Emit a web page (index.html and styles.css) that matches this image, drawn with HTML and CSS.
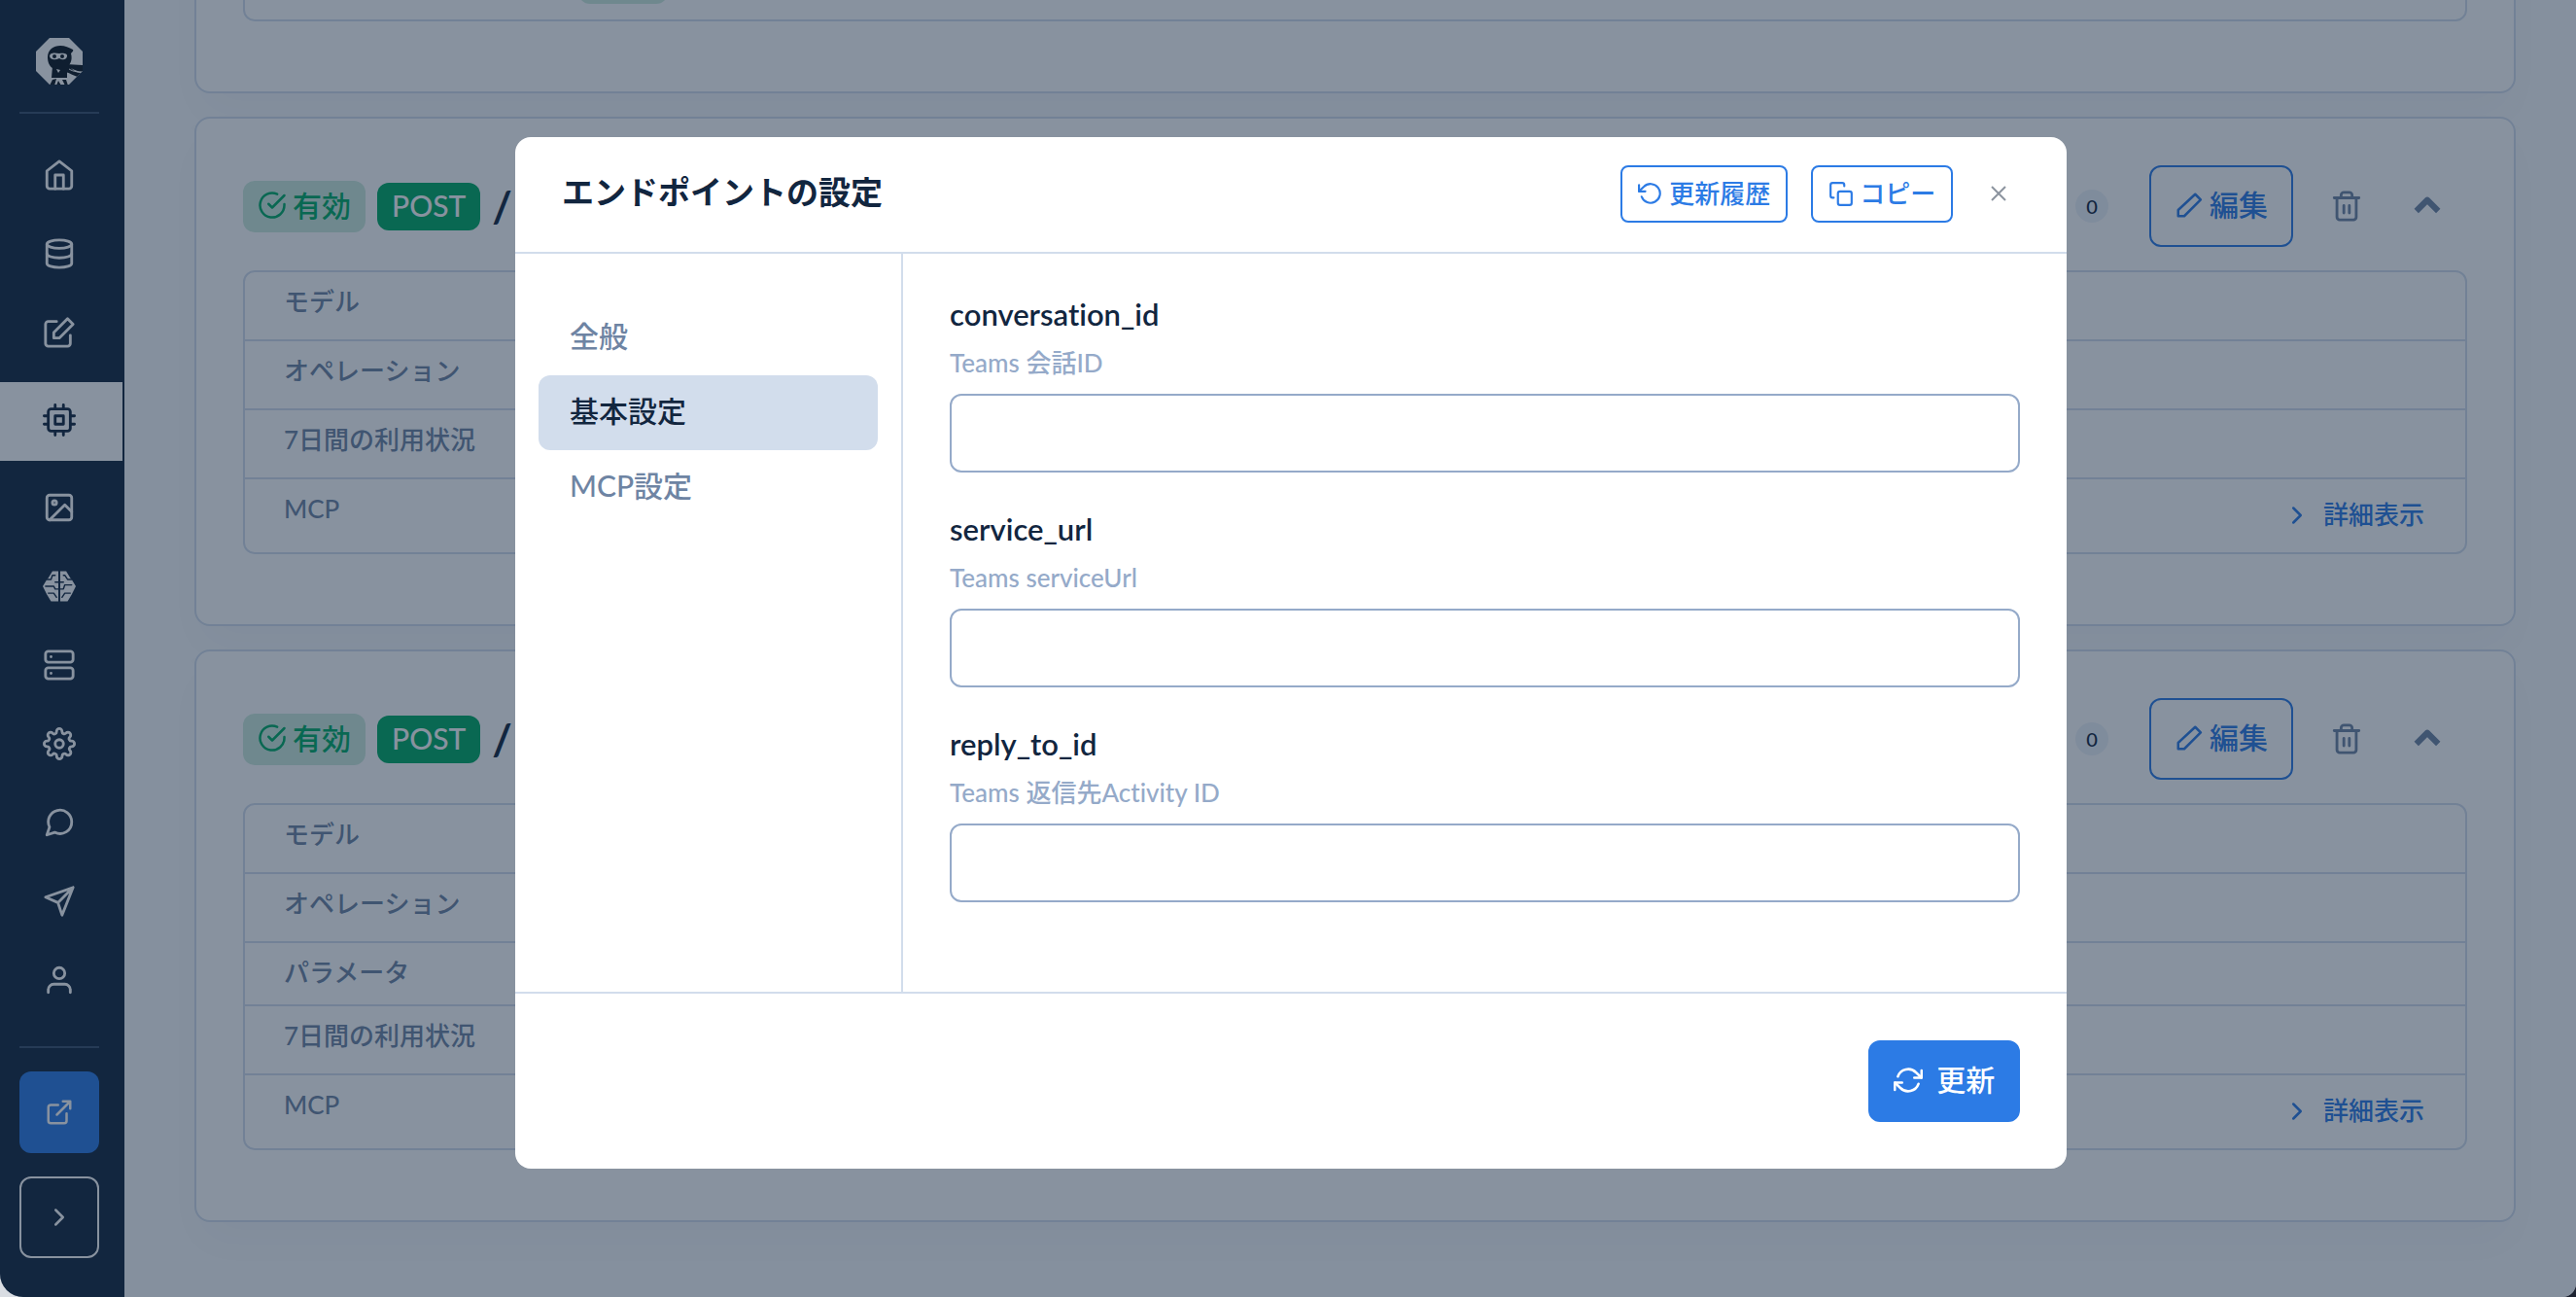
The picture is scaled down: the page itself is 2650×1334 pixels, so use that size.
FILE: index.html
```html
<!DOCTYPE html>
<html lang="ja">
<head>
  <meta charset="UTF-8" />
  <meta name="viewport" content="width=device-width, initial-scale=1.0"/>
  <title>エンドポイントの設定</title>
  <link rel="stylesheet" href="styles.css">
</head>
<body>
  <!-- shared icons -->
  <svg class="sprite" aria-hidden="true">
    <symbol id="i-check" viewBox="0 0 24 24"><path d="M22 11.1V12a10 10 0 1 1-5.9-9.1"/><path d="M22 4 12 14l-3-3"/></symbol>
    <symbol id="i-pencil" viewBox="0 0 24 24"><path d="M17 3l4.500 4.500L8 21H3v-5z"/></symbol>
    <symbol id="i-trash" viewBox="0 0 24 24"><path d="M3 6h18M19 6v14a2 2 0 0 1-2 2H7a2 2 0 0 1-2-2V6m3 0V4a2 2 0 0 1 2-2h4a2 2 0 0 1 2 2v2M10 11.500v5.500M14 11.500v5.500"/></symbol>
    <symbol id="i-up" viewBox="0 0 24 24"><path d="M3 16l9-9 9 9"/></symbol>
    <symbol id="i-right" viewBox="0 0 24 24"><path d="M9 18l6-6-6-6"/></symbol>
  </svg>

  <div class="app">
    <nav class="sidebar">
      <a class="brand" href="#" aria-label="ホーム">
        <svg viewBox="0 0 48 48">
          <defs><clipPath id="oct"><path d="M14 0h20l14 14v20L34 48H14L0 34V14z"/></clipPath></defs>
          <g clip-path="url(#oct)">
            <path fill="#fff" d="M0 0h48v48H0z"/>
            <g fill="#0d1720">
              <path d="M12 20C12 12 18 8 25 8c5 0 9 2 13 4 1 1-1 3-2 4 2 7-1 12-5 15H17c-3-2-5-6-5-11z"/>
              <path d="M17 29h15v12H16z"/>
              <path d="M31 27c6 0 11 1 18 1v7c-6 0-9-2-13-4 4 4 7 5 11 5l-2 5c-6-2-10-5-15-6z"/>
              <path d="M17 43l4-1-2 7h-5zM23 44l3 5h-5zM27 43h4l2 6h-3z"/>
            </g>
            <path fill="#fff" d="M14 19c0-4 5-4 10-3 4-1 9 0 8 3-1 4-5 4-8 2-4 2-9 2-10-2zM21 32l4 1-2 3z"/>
            <circle cx="19" cy="19" r="2" fill="#0d1720"/><circle cx="27" cy="19" r="2" fill="#0d1720"/>
            <path d="M34 32c5 3 9 3 14 3" fill="none" stroke="#fff" stroke-width="1"/>
          </g>
        </svg>
      </a>
      <hr class="divider">
      <ul class="menu">
        <li><a href="#" aria-label="ダッシュボード"><svg class="icon" viewBox="0 0 24 24"><path d="M3 9l9-7 9 7v11a2 2 0 0 1-2 2H5a2 2 0 0 1-2-2z"/><path d="M9 22V12h6v10"/></svg></a></li>
        <li><a href="#" aria-label="データ"><svg class="icon" viewBox="0 0 24 24"><ellipse cx="12" cy="5" rx="9" ry="3"/><path d="M21 12c0 1.700-4 3-9 3s-9-1.300-9-3"/><path d="M3 5v14c0 1.700 4 3 9 3s9-1.300 9-3V5"/></svg></a></li>
        <li><a href="#" aria-label="編集"><svg class="icon" viewBox="0 0 24 24"><path d="M10 4H4a2 2 0 0 0-2 2v14a2 2 0 0 0 2 2h14a2 2 0 0 0 2-2v-6"/><path d="M18 2l4 4-10 10H8v-4z"/></svg></a></li>
        <li class="active"><a href="#" aria-label="エンドポイント"><svg class="icon" viewBox="0 0 24 24"><rect x="4" y="4" width="16" height="16" rx="2"/><path d="M9 9h6v6H9zM9 1v3M15 1v3M9 20v3M15 20v3M20 9h3M20 15h3M1 9h3M1 15h3"/></svg></a></li>
        <li><a href="#" aria-label="画像"><svg class="icon" viewBox="0 0 24 24"><rect x="3" y="3" width="18" height="18" rx="2"/><circle cx="8.500" cy="8.500" r="1.500"/><path d="M21 15l-5-5L5 21"/></svg></a></li>
        <li><a href="#" aria-label="学習"><svg class="icon" viewBox="0 0 24 24">
          <path fill="currentColor" stroke="none" d="M11.300 1H7L4 6 3 7 0 12l3 6 3 5h5.300zM12.700 1H17l3 5 1 1 3 5-3 6-3 5h-5.300z"/>
          <path class="brain-line" d="M3 7h3l1-3h2M9 9h6M2 12h6l1 2h6l1-3h5M4 17h4l2 3M20 17h-4l-2 3M21 7h-3l-2-3h-1"/></svg></a></li>
        <li><a href="#" aria-label="サーバー"><svg class="icon" viewBox="0 0 24 24"><rect x="2" y="2" width="20" height="8" rx="2"/><rect x="2" y="14" width="20" height="8" rx="2"/><path d="M6 6h.01M6 18h.01"/></svg></a></li>
        <li><a href="#" aria-label="設定"><svg class="icon" viewBox="0 0 24 24"><circle cx="12" cy="12" r="3"/><path d="M19.400 15a1.650 1.650 0 0 0 .33 1.820l.06.06a2 2 0 1 1-2.830 2.830l-.06-.06a1.650 1.650 0 0 0-2.800 1.170V21a2 2 0 0 1-4 0v-.09A1.650 1.650 0 0 0 7.180 19.700l-.06.06a2 2 0 1 1-2.830-2.830l.06-.06A1.650 1.650 0 0 0 3.090 14H3a2 2 0 0 1 0-4h.09A1.650 1.650 0 0 0 4.300 7.180l-.06-.06a2 2 0 1 1 2.830-2.830l.06.06A1.650 1.650 0 0 0 10 3.090V3a2 2 0 0 1 4 0v.09a1.650 1.650 0 0 0 2.820 1.210l.06-.06a2 2 0 1 1 2.830 2.830l-.06.06A1.650 1.650 0 0 0 20.910 10H21a2 2 0 0 1 0 4h-.09a1.650 1.650 0 0 0-1.510 1z"/></svg></a></li>
        <li><a href="#" aria-label="チャット"><svg class="icon" viewBox="0 0 24 24"><path d="M21 11.500a8.400 8.400 0 0 1-12.300 7.600L3 21l1.900-5.700A8.500 8.500 0 1 1 21 11.500z"/></svg></a></li>
        <li><a href="#" aria-label="送信"><svg class="icon" viewBox="0 0 24 24"><path d="M22 2L11 13M22 2l-8 20-3-9-9-4z"/></svg></a></li>
        <li><a href="#" aria-label="ユーザー"><svg class="icon" viewBox="0 0 24 24"><path d="M20 21v-2a4 4 0 0 0-4-4H8a4 4 0 0 0-4 4v2"/><circle cx="12" cy="7" r="4"/></svg></a></li>
      </ul>
      <hr class="divider">
      <a class="side-btn open-btn" href="#" aria-label="外部リンク"><svg class="icon" viewBox="0 0 24 24"><path d="M18 13v6a2 2 0 0 1-2 2H5a2 2 0 0 1-2-2V8a2 2 0 0 1 2-2h6M15 3h6v6M10 14L21 3"/></svg></a>
      <button class="side-btn expand-btn" aria-label="メニューを開く"><svg class="icon"><use href="#i-right"/></svg></button>
    </nav>

    <main class="main">
      <section class="card">
        <table class="info">
          <tr class="last"><th></th><td><span class="tag"></span></td></tr>
        </table>
      </section>

      <section class="card">
        <div class="card-head">
          <span class="badge status"><svg class="icon"><use href="#i-check"/></svg>有効</span>
          <span class="badge method">POST</span>
          <h2 class="path">/</h2>
          <span class="count">0</span>
          <button class="btn outline"><svg class="icon"><use href="#i-pencil"/></svg>編集</button>
          <button class="icon-btn" aria-label="削除"><svg class="icon"><use href="#i-trash"/></svg></button>
          <button class="icon-btn up" aria-label="閉じる"><svg class="icon"><use href="#i-up"/></svg></button>
        </div>
        <table class="info">
          <tr class="tall"><th>モデル</th><td></td></tr>
          <tr class="tall"><th>オペレーション</th><td></td></tr>
          <tr class="tall"><th>7日間の利用状況</th><td></td></tr>
          <tr class="last"><th>MCP</th><td><a class="detail" href="#"><svg class="icon"><use href="#i-right"/></svg>詳細表示</a></td></tr>
        </table>
      </section>

      <section class="card">
        <div class="card-head">
          <span class="badge status"><svg class="icon"><use href="#i-check"/></svg>有効</span>
          <span class="badge method">POST</span>
          <h2 class="path">/</h2>
          <span class="count">0</span>
          <button class="btn outline"><svg class="icon"><use href="#i-pencil"/></svg>編集</button>
          <button class="icon-btn" aria-label="削除"><svg class="icon"><use href="#i-trash"/></svg></button>
          <button class="icon-btn up" aria-label="閉じる"><svg class="icon"><use href="#i-up"/></svg></button>
        </div>
        <table class="info">
          <tr class="tall"><th>モデル</th><td></td></tr>
          <tr class="tall"><th>オペレーション</th><td></td></tr>
          <tr><th>パラメータ</th><td></td></tr>
          <tr class="tall"><th>7日間の利用状況</th><td></td></tr>
          <tr class="last"><th>MCP</th><td><a class="detail" href="#"><svg class="icon"><use href="#i-right"/></svg>詳細表示</a></td></tr>
        </table>
      </section>
    </main>

    <!-- Settings modal -->
    <div class="overlay">
      <div class="modal" role="dialog" aria-labelledby="modalTitle">
        <header class="modal-header">
          <h1 id="modalTitle">エンドポイントの設定</h1>
          <button class="btn-sm"><svg class="icon" viewBox="0 0 24 24"><path d="M1 4v6h6"/><path d="M3.500 15a9 9 0 1 0 2.100-9.400L1 10"/></svg>更新履歴</button>
          <button class="btn-sm"><svg class="icon" viewBox="0 0 24 24"><rect x="9" y="10" width="13" height="13" rx="2"/><path d="M5 16H4a2 2 0 0 1-2-2V4a2 2 0 0 1 2-2h9a2 2 0 0 1 2 2v1"/></svg>コピー</button>
          <button class="close-btn" aria-label="閉じる"><svg viewBox="0 0 16 16"><path d="M1 1l14 14M15 1L1 15"/></svg></button>
        </header>
        <div class="modal-body">
          <nav class="tabs">
            <a href="#">全般</a>
            <a href="#" class="active">基本設定</a>
            <a href="#">MCP設定</a>
          </nav>
          <form class="fields" id="settings">
            <div class="field">
              <label for="conversation_id">conversation_id</label>
              <p>Teams 会話ID</p>
              <input type="text" id="conversation_id">
            </div>
            <div class="field">
              <label for="service_url">service_url</label>
              <p>Teams serviceUrl</p>
              <input type="text" id="service_url">
            </div>
            <div class="field">
              <label for="reply_to_id">reply_to_id</label>
              <p>Teams 返信先Activity ID</p>
              <input type="text" id="reply_to_id">
            </div>
          </form>
        </div>
        <footer class="modal-footer">
          <button class="btn primary" form="settings" type="button"><svg class="icon" viewBox="0 0 24 24"><path d="M23 4v6h-6M1 20v-6h6"/><path d="M3.500 9a9 9 0 0 1 14.900-3.400L23 10M1 14l4.600 4.400A9 9 0 0 0 20.500 15"/></svg>更新</button>
        </footer>
      </div>
    </div>
  </div>
</body>
</html>
```
FILE: styles.css
```css
* {
  margin: 0;
  padding: 0;
  box-sizing: border-box;
}

html {
  background: linear-gradient(to right, #d9dde3 50%, #1c2230 50%);
}

body {
  font-family: Lato, "Noto Sans CJK JP", sans-serif;
  font-size: 30px;
  font-weight: 500;
  font-variant-ligatures: none;
  line-height: 45px;
  color: #12263f;
}

a {
  color: inherit;
  text-decoration: none;
}

button,
input {
  font: inherit;
  color: inherit;
  background: none;
  border: none;
}

button {
  cursor: pointer;
}

.sprite {
  display: none;
}

.icon {
  width: 30px;
  height: 30px;
  flex: none;
  fill: none;
  stroke: currentColor;
  stroke-width: 2;
  stroke-linecap: round;
  stroke-linejoin: round;
}

.app {
  position: relative;
  display: flex;
  height: 100vh;
  overflow: hidden;
  background: #f9fbfd;
  border-radius: 0 0 14px 24px;
}

/* Sidebar */
.sidebar {
  width: 128px;
  flex: none;
  display: flex;
  flex-direction: column;
  padding: 39px 0 40px;
  background: #12263f;
  border-right: 2px solid #12263f;
  color: #fff;
}

.brand {
  width: 48px;
  height: 48px;
  margin: 0 37px 28px;
}

.brand svg {
  display: block;
}

.divider {
  width: 82px;
  margin-left: 20px;
  border: none;
  border-top: 2px solid #3b506c;
}

.menu {
  flex: 1;
  display: flex;
  flex-direction: column;
  list-style: none;
  padding-top: 22px;
}

.menu a {
  display: flex;
  align-items: center;
  height: 81px;
  padding-left: 44px;
}

.menu .icon {
  width: 34px;
  height: 34px;
}

.menu .active {
  margin: 11px 0 7px;
  background: #fff;
  color: #12263f;
}

.menu .active a {
  padding-bottom: 3px;
}

.brain-line {
  stroke: #12263f;
  stroke-width: 1;
}

.side-btn {
  display: flex;
  align-items: center;
  justify-content: center;
  width: 82px;
  height: 84px;
  margin: 24px 0 0 20px;
  border-radius: 12px;
}

.open-btn {
  background: #2c7be5;
}

.expand-btn {
  border: 2px solid #fff;
}

/* Endpoint cards, scrolled to the end of the list */
.main {
  flex: 1;
  display: flex;
  flex-direction: column;
  justify-content: flex-end;
  gap: 24px;
  padding: 0 62px 77px 72px;
}

.card {
  padding: 48px 48px 72px;
  background: #fff;
  border: 2px solid #d2ddec;
  border-radius: 16px;
  box-shadow: 0 24px 48px rgba(18, 38, 63, 0.03);
}

.card-head {
  display: flex;
  align-items: center;
  gap: 12px;
  margin-bottom: 24px;
}

.badge {
  display: flex;
  align-items: center;
  gap: 6px;
  padding: 3px 15px 5px;
  border-radius: 12px;
}

.status {
  background: #ccebdd;
  color: #00aa65;
}

.method {
  padding: 1px 15px 3px;
  background: #00aa65;
  color: #fff;
}

.path {
  flex: 1;
  font-size: 44px;
}

.count {
  width: 34px;
  margin-right: 30px;
  border-radius: 17px;
  background: #edf2f9;
  font-size: 20px;
  line-height: 34px;
  text-align: center;
}

.btn {
  display: flex;
  align-items: center;
  gap: 6px;
  height: 84px;
  padding: 0 24px 3px;
  border: 2px solid #2c7be5;
  border-radius: 12px;
}

.outline {
  color: #2c7be5;
}

.primary {
  gap: 14px;
  background: #2c7be5;
  color: #fff;
}

.icon-btn {
  display: flex;
  margin: 0 27px 0 26px;
  color: #6e84a3;
}

.icon-btn .icon {
  width: 34px;
  height: 34px;
}

.up {
  margin-right: 26px;
  margin-left: 12px;
}

.up .icon {
  width: 30px;
  stroke-width: 5;
  stroke-linecap: butt;
}

.info {
  width: 100%;
  border: 2px solid #d2ddec;
  border-radius: 12px;
  border-spacing: 0;
  font-size: 26px;
  line-height: 39px;
  color: #6e84a3;
}

.info th,
.info td {
  height: 65px;
  padding: 11px 42px 13px 40px;
  border-bottom: 2px solid #d2ddec;
  font-weight: 500;
  text-align: left;
  vertical-align: top;
}

.info th {
  width: 303px;
}

.info .tall th,
.info .tall td {
  height: 71px;
}

.info .last th,
.info .last td {
  height: 75px;
  border-bottom: none;
}

.info .last td {
  vertical-align: middle;
}

.detail {
  display: flex;
  align-items: center;
  justify-content: flex-end;
  gap: 12px;
  color: #2c7be5;
}

.tag {
  display: block;
  width: 92px;
  height: 44px;
  border-radius: 12px;
  background: #ccebdd;
}

/* Modal */
.overlay {
  position: absolute;
  inset: 0;
  background: rgba(18, 38, 63, 0.5);
}

.modal {
  width: 60.24%;
  margin: 141px auto 0 20%;
  background: #fff;
  border-radius: 16px;
}

.modal-header {
  display: flex;
  align-items: center;
  gap: 24px;
  height: 120px;
  padding: 0 48px 2px;
  border-bottom: 2px solid #d2ddec;
}

.modal-header h1 {
  flex: 1;
  padding-bottom: 3px;
  font-size: 33px;
  font-weight: 700;
}

.btn-sm {
  display: flex;
  align-items: center;
  gap: 6px;
  padding: 8px 16px;
  border: 2px solid #2c7be5;
  border-radius: 8px;
  color: #2c7be5;
  font-size: 26px;
  line-height: 39px;
}

.btn-sm .icon {
  width: 26px;
  height: 26px;
}

.close-btn {
  display: flex;
  justify-content: center;
  width: 45px;
}

.close-btn svg {
  width: 16px;
  height: 16px;
  stroke: #8c949f;
  stroke-width: 2;
}

.modal-body {
  display: flex;
}

.tabs {
  width: 25%;
  padding: 48px 24px;
  border-right: 2px solid #d2ddec;
  color: #6e84a3;
}

.tabs a {
  display: block;
  padding: 14px 32px 18px;
  border-radius: 12px;
}

.tabs .active {
  background: #d2ddec;
  color: #12263f;
}

.fields {
  flex: 1;
  display: flex;
  flex-direction: column;
  gap: 36px;
  padding: 40px 48px 92px;
}

.field label {
  display: block;
  margin-bottom: 8px;
  font-size: 31px;
  font-weight: 600;
}

.field p {
  height: 39px;
  margin-bottom: 12px;
  font-size: 26px;
  line-height: 39px;
  color: #95aac9;
}

.field input {
  display: block;
  width: 100%;
  height: 81px;
  padding: 0 24px;
  border: 2px solid #95aac9;
  border-radius: 12px;
}

.modal-footer {
  display: flex;
  justify-content: flex-end;
  padding: 48px;
  border-top: 2px solid #d2ddec;
}
```
